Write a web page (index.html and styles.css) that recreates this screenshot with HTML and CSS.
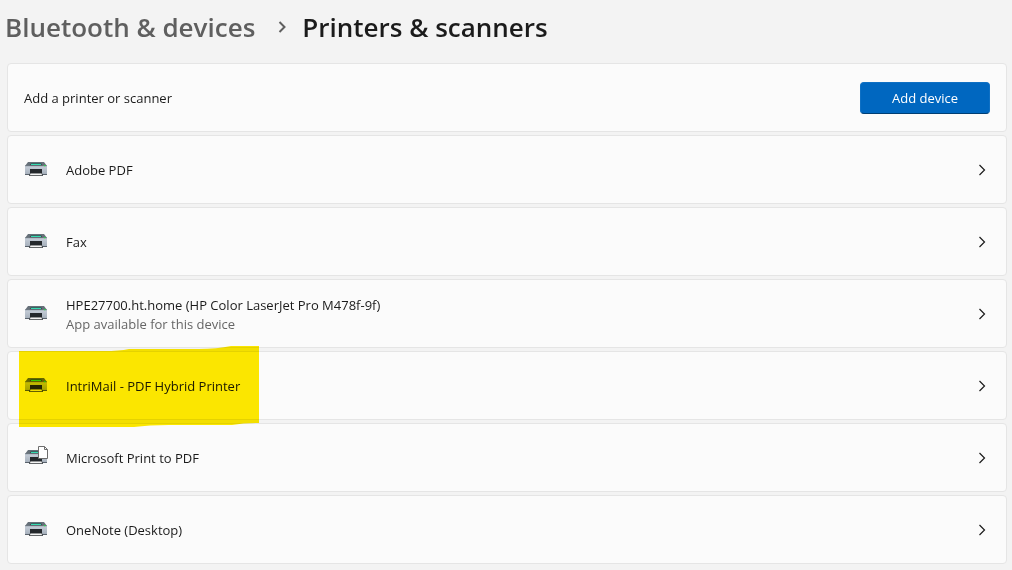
FILE: index.html
```html
<!DOCTYPE html>
<html lang="en">
<head>
    <meta charset="UTF-8">
    <meta name="viewport" content="width=device-width, initial-scale=1.0">
    <title>Printers &amp; scanners</title>
    <link rel="stylesheet" href="styles.css">
</head>
<body>
    <!-- Shared icons -->
    <svg class="icon-defs" aria-hidden="true">
        <defs>
            <linearGradient id="printer-body" x1="0" y1="0" x2="0" y2="1">
                <stop offset="0" stop-color="#c6ced8"/>
                <stop offset="1" stop-color="#a3adb9"/>
            </linearGradient>
        </defs>
        <symbol id="printer" viewBox="0 0 24 20">
            <path d="M4 2h16l3 4H1z" fill="#667079"/>
            <path d="M7 3h10l1.5 2.5h-13z" fill="#3b474c"/>
            <path d="M7 3.8h10V5H7z" fill="#35d9b0"/>
            <path d="M1 6h22v9H1z" fill="url(#printer-body)"/>
            <path d="M1 5.5h22v.7H1z" fill="#737d87"/>
            <path d="M20 5h1.4v1.2H20z" fill="#22e045"/>
            <path d="M1 14h22v1H1z" fill="#59626c"/>
            <path d="M6 9h12v5H6z" fill="#24282c"/>
            <path d="M6 13h12l1 3H5z" fill="#34383b"/>
            <path d="M6.5 13.6h11l.6 1.6H5.9z" fill="#f4f4f4"/>
        </symbol>
        <symbol id="page" viewBox="0 0 12 14">
            <path d="M1.5.5h6l3 3v9h-9z" fill="#fff" stroke="#6d6d6d"/>
            <path d="M7.5.5v3h3" fill="none" stroke="#6d6d6d"/>
        </symbol>
        <symbol id="chevron" viewBox="0 0 8 12">
            <path d="M1.5 1l5 5-5 5" fill="none" stroke="currentColor"/>
        </symbol>
    </svg>

    <header class="breadcrumb">
        <a class="parent" href="#">Bluetooth &amp; devices</a>
        <svg class="separator" aria-hidden="true"><use href="#chevron"/></svg>
        <h1>Printers &amp; scanners</h1>
    </header>

    <main class="devices">
        <section class="card">
            <span class="label">Add a printer or scanner</span>
            <button class="add-btn" type="button">Add device</button>
        </section>

        <a class="card" href="#">
            <span class="icon"><svg class="printer"><use href="#printer"/></svg></span>
            <span class="label">Adobe PDF</span>
            <svg class="chevron"><use href="#chevron"/></svg>
        </a>

        <a class="card" href="#">
            <span class="icon"><svg class="printer"><use href="#printer"/></svg></span>
            <span class="label">Fax</span>
            <svg class="chevron"><use href="#chevron"/></svg>
        </a>

        <a class="card" href="#">
            <span class="icon"><svg class="printer"><use href="#printer"/></svg></span>
            <span class="label">HPE27700.ht.home (HP Color LaserJet Pro M478f-9f)
                <span class="note">App available for this device</span>
            </span>
            <svg class="chevron"><use href="#chevron"/></svg>
        </a>

        <a class="card" href="#">
            <span class="icon"><svg class="printer"><use href="#printer"/></svg></span>
            <span class="label">IntriMail - PDF Hybrid Printer</span>
            <svg class="chevron"><use href="#chevron"/></svg>
            <!-- Marker pen over the row -->
            <svg class="highlight" viewBox="0 0 240 82" aria-hidden="true">
                <path d="M0 5H85Q100 5 110 3H180Q198 3 212 0H240V77Q225 77 213 79H150Q130 79 115 81H0z" fill="#ffea00"/>
            </svg>
        </a>

        <a class="card" href="#">
            <span class="icon">
                <svg class="printer"><use href="#printer"/></svg>
                <svg class="page"><use href="#page"/></svg>
            </span>
            <span class="label">Microsoft Print to PDF</span>
            <svg class="chevron"><use href="#chevron"/></svg>
        </a>

        <a class="card" href="#">
            <span class="icon"><svg class="printer"><use href="#printer"/></svg></span>
            <span class="label">OneNote (Desktop)</span>
            <svg class="chevron"><use href="#chevron"/></svg>
        </a>
    </main>
</body>
</html>
```
FILE: styles.css
```css
/* General Page Styling */
* {
    box-sizing: border-box;
}

body {
    margin: 0;
    background: #f3f3f3;
    color: #1b1b1b;
    font-family: 'Segoe UI', 'Open Sans', 'Noto Sans', sans-serif;
    font-size: 13px;
    line-height: 19px;
}

a {
    color: inherit;
    text-decoration: none;
}

.icon-defs {
    position: absolute;
    width: 0;
    height: 0;
}

/* Breadcrumb */
.breadcrumb {
    display: flex;
    align-items: center;
    height: 54px;
    padding: 0 5px;
    font-size: 26px;
    font-weight: 600;
    line-height: 36px;
}

.breadcrumb .parent {
    color: #5f5f5f;
}

.breadcrumb .separator {
    width: 8px;
    height: 12px;
    margin: 0 16px 0 23px;
    color: #5f5f5f;
    stroke-width: 2;
}

h1 {
    margin: 0;
    font-size: inherit;
    font-weight: inherit;
}

/* Device Cards */
.devices {
    display: flex;
    flex-direction: column;
    gap: 3px;
    padding: 9px 5px 6px 7px;
}

.card {
    position: relative;
    display: flex;
    align-items: center;
    min-height: 69px;
    padding: 0 16px;
    background: #fbfbfb;
    border: 1px solid #e5e5e5;
    border-radius: 4px;
}

.label {
    flex: 1;
    padding-top: 2px;
}

.note {
    display: block;
    color: #666666;
}

.add-btn {
    width: 130px;
    height: 32px;
    padding: 2px 0 0;
    background: #0067c0;
    color: #ffffff;
    font: inherit;
    border: 1px solid #0f70c4;
    border-bottom-color: #003e73;
    border-radius: 4px;
    cursor: pointer;
}

/* Icons */
.icon {
    position: relative;
    width: 24px;
    height: 20px;
    margin-right: 18px;
}

.printer {
    display: block;
    width: 24px;
    height: 20px;
}

.page {
    position: absolute;
    top: -2px;
    right: -1px;
    width: 12px;
    height: 14px;
}

.chevron {
    width: 8px;
    height: 12px;
    margin-right: 4px;
    stroke-width: 1.2;
}

/* Marker */
.highlight {
    position: absolute;
    top: -6px;
    left: 11px;
    z-index: 1;
    width: 240px;
    height: 82px;
    mix-blend-mode: multiply;
    pointer-events: none;
}
```
